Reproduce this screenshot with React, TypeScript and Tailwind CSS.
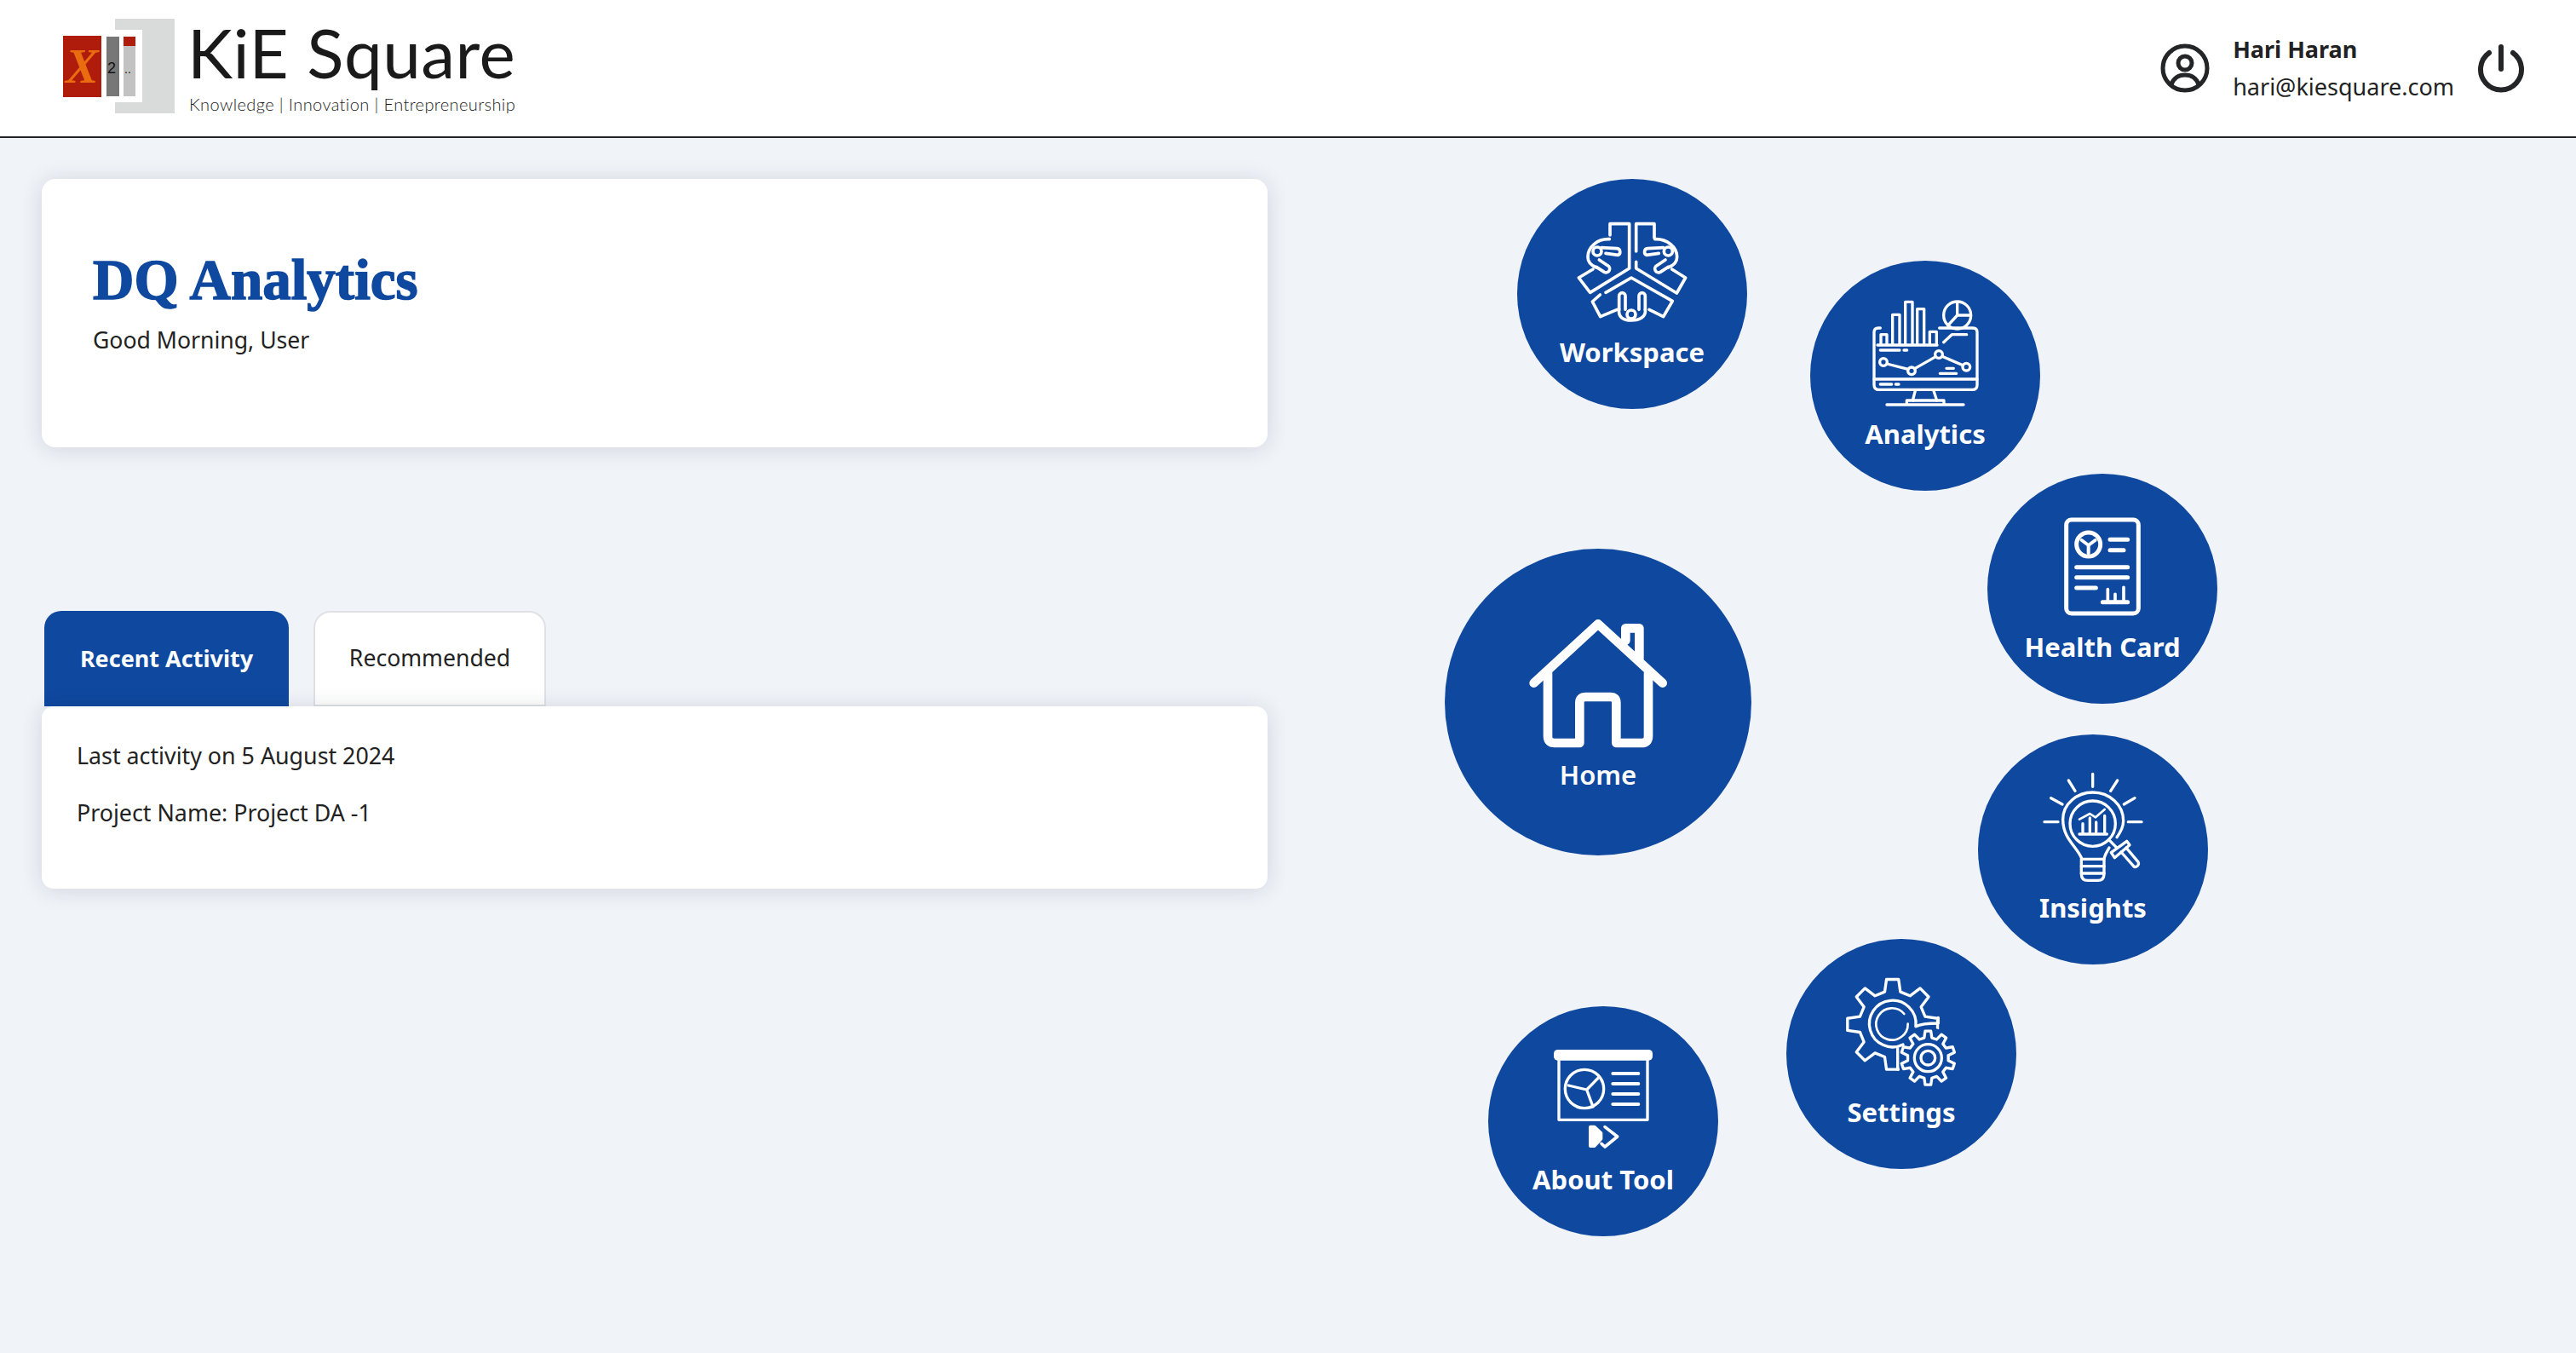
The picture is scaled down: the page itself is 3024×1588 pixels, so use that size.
import React from 'react';

const gearPath = (cx: number, cy: number, outer: number, inner: number, teeth: number, rot = 0) => {
  const pts: string[] = [];
  const step = (Math.PI * 2) / teeth;
  for (let i = 0; i < teeth; i++) {
    const a = rot + i * step;
    const add = (r: number, t: number) => pts.push(`${(cx + r * Math.sin(t)).toFixed(1)} ${(cy - r * Math.cos(t)).toFixed(1)}`);
    add(inner, a - step * 0.3);
    add(outer, a - step * 0.17);
    add(outer, a + step * 0.17);
    add(inner, a + step * 0.3);
  }
  return `M${pts.join('L')}Z`;
};

const WorkspaceIcon = () => (
  <g fill="none" stroke="white" strokeWidth={11} strokeLinecap="round" strokeLinejoin="round">
    <path d="M360 228V188H428V345L290 430L250 378L300 348" />
    <path d="M452 285V188H516V238" />
    <path d="M452 322V345L595 432L626 378L578 348" />
    <path d="M345 430L435 378L580 460L548 515L498 490" />
    <path d="M325 438L298 462L326 515L385 490" />
    <path d="M358 242C315 240 282 270 282 305C282 325 295 335 312 342" />
    <path d="M518 242C560 240 596 270 596 305C596 325 582 335 565 342" />
    <circle cx="315" cy="285" r="15" />
    <circle cx="565" cy="285" r="15" />
    <path d="M330 272L385 275A12 12 0 0 1 388 298L345 292" />
    <path d="M548 272L492 275A12 12 0 0 0 489 298L532 292" />
    <path d="M322 315L352 335A11 11 0 0 1 340 358L312 340" />
    <path d="M555 315L525 335A11 11 0 0 0 537 358L565 340" />
    <path d="M392 490V442A11 11 0 0 1 414 442V490" />
    <path d="M462 490V442A11 11 0 0 1 484 442V490" />
    <path d="M392 490C388 515 405 528 435 528C465 528 488 515 484 490" />
    <circle cx="435" cy="507" r="15" />
  </g>
);

const AnalyticsIcon = () => (
  <g fill="none" stroke="white" strokeWidth={10} strokeLinecap="round" strokeLinejoin="round">
    <path d="M262 255H255Q240 255 240 270V455Q240 472 257 472H586Q603 472 603 455V270Q603 255 588 255H470" />
    <path d="M240 435H603" />
    <path d="M264 312V278H285V312M305 312V208H330V312M350 312V163H375V312M392 312V188H416V312M436 312V268H460V312" />
    <path d="M252 315H462" />
    <path d="M262 333H330M345 333H356" />
    <circle cx="273" cy="375" r="13" />
    <circle cx="372" cy="406" r="13" />
    <circle cx="468" cy="348" r="13" />
    <circle cx="565" cy="392" r="13" />
    <path d="M285 381L360 400M383 398L457 356M480 355L553 386" />
    <path d="M472 415H530M495 397H520" />
    <path d="M262 453H302M316 453H327" />
    <circle cx="533" cy="210" r="48" />
    <path d="M533 165V210H580M533 210L500 246" />
    <path d="M485 305L514 278H566" />
    <path d="M385 476L376 510M450 476L461 510" />
    <path d="M355 522V510H486V522M285 525H555" />
  </g>
);

const HealthIcon = () => (
  <g fill="none" stroke="white" strokeWidth={15} strokeLinecap="round" strokeLinejoin="round">
    <rect x="318" y="180" width="254" height="330" rx="18" />
    <circle cx="396" cy="267" r="42" />
    <path d="M396 270L372 252M396 270L420 252M396 270V298" strokeWidth={12} />
    <path d="M472 250H534M472 287H520M354 347H534M354 383H534M354 420H422M446 470H534" />
    <path d="M464 425V465M490 442V465M520 418V465" strokeWidth={11} />
  </g>
);

const InsightsIcon = () => (
  <g fill="none" stroke="white" strokeWidth={10} strokeLinecap="round" strokeLinejoin="round">
    <path d="M440 145V190M355 168L378 205M527 168L503 205M293 230L333 252M588 230L550 252M270 314H318M565 314H612" />
    <path d="M402 445C385 400 335 375 335 305C335 250 385 210 440 210C500 210 548 255 548 310C548 335 537 352 525 368" />
    <path d="M480 445C482 430 490 420 498 405" />
    <path d="M400 445H480V497Q480 520 458 520H422Q400 520 400 497Z" />
    <path d="M400 470H480M400 495H480" />
    <circle cx="440" cy="320" r="80" />
    <path d="M497 377L523 403" />
    <path d="M505 422L560 382L570 395L517 440Z" />
    <path d="M540 420L586 472A12 12 0 0 0 600 455L558 405" />
    <path d="M393 357H490M405 350V320M430 350V300M452 350V315M482 350V292" />
    <path d="M393 305L430 285L450 298L482 270" strokeWidth={8} />
  </g>
);

const SettingsIcon = () => (
  <g fill="none" stroke="white" strokeWidth={10} strokeLinejoin="round" strokeLinecap="round">
    <path d={gearPath(395, 307, 160, 118, 8)} />
    <circle cx="520" cy="425" r="108" fill="#0f489f" stroke="none" />
    <path d="M413 466V392" />
    <path d="M432 378A82 82 0 1 1 477 312" />
    <path d="M477 314C495 305 520 303 556 303V283" />
    <path d="M449 305A56 56 0 1 1 436 270" strokeWidth={8} />
    <path d={gearPath(520, 425, 95, 72, 10)} fill="#0f489f" />
    <circle cx="520" cy="425" r="48" />
    <circle cx="520" cy="425" r="25" />
  </g>
);

const AboutIcon = () => (
  <g fill="none" stroke="white" strokeWidth={10} strokeLinecap="round" strokeLinejoin="round">
    <rect x="252" y="156" width="348" height="38" rx="14" fill="white" stroke="none" />
    <path d="M270 194V403H582V194" />
    <circle cx="360" cy="294" r="68" />
    <path d="M368 297L412 252M368 297L304 282M368 297L390 357" />
    <path d="M460 240H550M460 276H550M460 312H550M460 348H550" strokeWidth={12} />
    <path d="M381 428H395L418 450V470L395 495H381Z" fill="white" strokeWidth={12} />
    <path d="M432 428L476 462L432 498L420 487" strokeWidth={11} />
  </g>
);

const HomeIcon = () => (
  <g fill="none" stroke="white" strokeWidth={32} strokeLinecap="round" strokeLinejoin="round">
    <path d="M332 485L558 277L785 485" />
    <path d="M381 450V672Q381 696 405 696H493V555Q493 534 514 534H602Q622 534 622 555V696H712Q735 696 735 672V450" />
    <path d="M655 335V292H703V398" />
  </g>
);

const nodes = [
  { label: 'Workspace', pos: 'left-[293px] top-[48px]', box: '33 30 810 555', icon: <WorkspaceIcon /> },
  { label: 'Analytics', pos: 'left-[637px] top-[144px]', box: '15 18 810 555', icon: <AnalyticsIcon /> },
  { label: 'Health Card', pos: 'left-[845px] top-[394px]', box: '40 18 810 555', icon: <HealthIcon /> },
  { label: 'Insights', pos: 'left-[834px] top-[700px]', box: '36 6 810 555', icon: <InsightsIcon /> },
  { label: 'Settings', pos: 'left-[609px] top-[940px]', box: '21 6 810 555', icon: <SettingsIcon /> },
  { label: 'About Tool', pos: 'left-[259px] top-[1019px]', box: '21 3 810 555', icon: <AboutIcon /> },
];

const KieLogo = () => (
  <svg width="131" height="134" viewBox="0 13 131 134" className="shrink-0">
    <rect x="61" y="22" width="70" height="111" fill="#d9dbdb" />
    <rect x="61" y="35" width="32" height="85" fill="white" />
    <rect x="0" y="42" width="45" height="72" fill="#b01c0c" />
    <rect x="51" y="43" width="15" height="70" fill="#777777" />
    <rect x="71" y="43" width="14" height="70" fill="#c2c2c2" />
    <rect x="71" y="43" width="14" height="11" fill="#b01c0c" />
    <text x="3" y="97" fill="#ea6c10" fontFamily="'Liberation Serif', serif" fontStyle="italic" fontWeight="700" fontSize="58">X</text>
    <text x="52" y="86" fill="#111" fontFamily="'Liberation Sans', sans-serif" fontSize="18">2</text>
    <text x="72" y="86" fill="#111" fontFamily="'Liberation Sans', sans-serif" fontSize="14">..</text>
  </svg>
);

export default function App() {
  return (
    <div className="h-[1588px] w-full overflow-hidden bg-[#f0f3f8] font-['Noto_Sans',sans-serif] text-[#222222]">
      <header className="flex h-[162px] items-center justify-between border-b-2 border-[#222427] bg-white pl-[74px] pr-[60px]">
        <div className="flex items-start">
          <KieLogo />
          <div className="ml-[17px] flex flex-col pt-[2px] font-['Lato',sans-serif] text-[#1a1a1a]">
            <span className="ml-[-2px] text-[80px] font-normal leading-[92px] tracking-[0.5px]">KiE Square</span>
            <span className="mt-[4px] text-[20px] font-light leading-[22px] tracking-[0.4px]">Knowledge | Innovation | Entrepreneurship</span>
          </div>
        </div>
        <div className="flex items-center">
          <svg width="60" height="60" viewBox="0 0 60 60" fill="none" stroke="#242527" strokeWidth="5" strokeLinecap="round">
            <circle cx="30" cy="30" r="26" />
            <circle cx="30" cy="24" r="8" />
            <path d="M14 49C17 41 23 38 30 38C37 38 43 41 46 49" />
          </svg>
          <div className="ml-[26px] flex flex-col">
            <span className="text-[27px] font-bold leading-[44px]">Hari Haran</span>
            <span className="text-[27px] leading-[44px]">hari@kiesquare.com</span>
          </div>
          <svg className="ml-[27px]" width="56" height="58" viewBox="0 0 56 58" fill="none" stroke="#242527" strokeWidth="6" strokeLinecap="round">
            <path d="M28 4V30" />
            <path d="M14 11A24 24 0 1 0 42 11" />
          </svg>
        </div>
      </header>

      <main className="flex">
        <section className="w-[1488px] shrink-0 pl-[49px] pt-[48px]">
          <div className="flex h-[315px] flex-col rounded-[16px] bg-white pl-[60px] pt-[80px] shadow-[0_2px_26px_rgba(30,40,60,0.14)]">
            <h1 className="font-['Liberation_Serif',serif] text-[67px] font-bold leading-[76px] text-[#0f489f] [-webkit-text-stroke:1.5px_#0f489f]">DQ Analytics</h1>
            <p className="mt-[14px] text-[26.6px] leading-[38px]">Good Morning, User</p>
          </div>

          <div className="mt-[192px] flex gap-[29px] pl-[3px]">
            <button className="h-[112px] w-[287px] rounded-t-[20px] bg-[#0f489f] text-[27px] font-bold text-white">Recent Activity</button>
            <button className="h-[112px] w-[273px] rounded-t-[20px] border-2 border-[#dfe1e5] bg-white text-[26.6px]">Recommended</button>
          </div>
          <div className="relative z-10 flex h-[214px] flex-col gap-[27px] rounded-[14px] bg-white pl-[41px] pt-[38px] shadow-[0_2px_26px_rgba(30,40,60,0.14)]">
            <p className="text-[26.8px] leading-[40px]">Last activity on 5 August 2024</p>
            <p className="text-[26.8px] leading-[40px]">Project Name: Project DA -1</p>
          </div>
        </section>

        <section className="relative h-[1426px] flex-1">
          <div className="absolute left-[208px] top-[482px] flex h-[360px] w-[360px] flex-col items-center rounded-full bg-[#0f489f]">
            <svg className="shrink-0" width="360" height="247" viewBox="18 12 1080 741"><HomeIcon /></svg>
            <span className="text-[31px] font-semibold leading-[36px] text-white">Home</span>
          </div>
          {nodes.map(n => (
            <div key={n.label} className={`absolute flex h-[270px] w-[270px] flex-col items-center rounded-full bg-[#0f489f] ${n.pos}`}>
              <svg className="shrink-0" width="270" height="185" viewBox={n.box}>{n.icon}</svg>
              <span className="text-[31px] font-bold leading-[36px] text-white">{n.label}</span>
            </div>
          ))}
        </section>
      </main>
    </div>
  );
}
